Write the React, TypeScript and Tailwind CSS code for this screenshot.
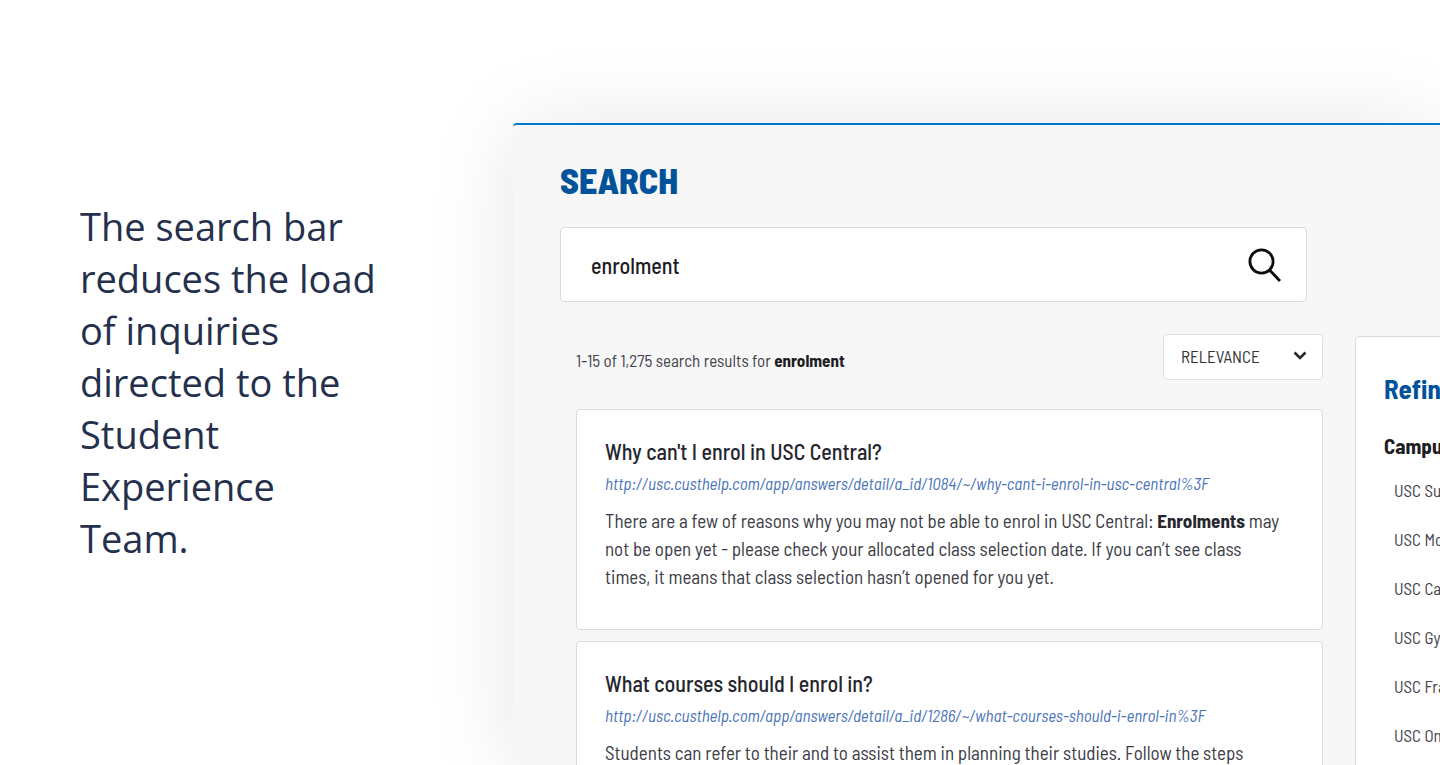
import { useState } from 'react'

interface SearchResult {
  id: number
  title: string
  slug: string
  parts: { text: string; bold?: boolean }[]
}

const results: SearchResult[] = [
  {
    id: 1084,
    title: "Why can't I enrol in USC Central?",
    slug: 'why-cant-i-enrol-in-usc-central%3F',
    parts: [
      { text: 'There are a few of reasons why you may not be able to enrol in USC Central: ' },
      { text: 'Enrolments', bold: true },
      { text: ' may not be open yet - please check your allocated class selection date. If you can’t see class times, it means that class selection hasn’t opened for you yet.' },
    ],
  },
  {
    id: 1286,
    title: 'What courses should I enrol in?',
    slug: 'what-courses-should-i-enrol-in%3F',
    parts: [
      { text: 'Students can refer to their and to assist them in planning their studies. Follow the steps' },
    ],
  },
]

const campuses = ['USC Sunshine Coast', 'USC Moreton Bay', 'USC Caboolture', 'USC Gympie', 'USC Fraser Coast', 'USC Online']

function SearchBox() {
  const [query, setQuery] = useState('enrolment')

  return (
    <form
      className="flex items-center mr-4 h-[75px] rounded border border-[#dadada] bg-white pl-[30px] pr-6"
      onSubmit={(e) => e.preventDefault()}
    >
      <input
        type="text"
        aria-label="Search"
        value={query}
        onChange={(e) => setQuery(e.target.value)}
        className="min-w-0 flex-1 bg-transparent text-[22px] leading-8 font-medium text-[#1d1d24] outline-none"
      />
      <button type="submit" aria-label="Submit search">
        <svg viewBox="0 0 34 36" className="w-[34px] h-9" fill="none" stroke="#0b0b0b" strokeWidth="2.8">
          <circle cx="13.5" cy="14.5" r="11.6" />
          <path d="M21 22.5 L32 34" />
        </svg>
      </button>
    </form>
  )
}

function SortSelect() {
  return (
    <div className="relative">
      <select
        aria-label="Sort by"
        defaultValue="relevance"
        className="block w-40 h-[46px] appearance-none rounded border border-[#e0e0e0] bg-white pl-[17px] text-[17px] text-[#33333b]"
      >
        <option value="relevance">RELEVANCE</option>
        <option value="date">DATE</option>
      </select>
      <svg
        viewBox="0 0 14 10"
        className="pointer-events-none absolute right-4 top-[17px] w-3.5 h-2.5"
        fill="none"
        stroke="#26262b"
        strokeWidth="2.6"
      >
        <path d="M1.5 1.5 L7 7 L12.5 1.5" />
      </svg>
    </div>
  )
}

function ResultCard({ result }: { result: SearchResult }) {
  const path = `http://usc.custhelp.com/app/answers/detail/a_id/${result.id}/~/${result.slug}`

  return (
    <article className="rounded border border-[#dadada] bg-white pl-7 pr-9 pt-[25px] pb-[38px]">
      <h2 className="text-[22px] leading-8 font-medium text-[#26262e]">{result.title}</h2>
      <a href={path} className="block text-[17px] leading-8 italic text-[#4a74b8] whitespace-nowrap">
        {path}
      </a>
      <p className="mt-2 text-[19px] leading-7 text-[#3c3c46]">
        {result.parts.map((part, i) =>
          part.bold ? (
            <strong key={i} className="font-bold text-[#26262e]">{part.text}</strong>
          ) : (
            part.text
          )
        )}
      </p>
    </article>
  )
}

export default function App() {
  return (
    <main className="flex h-screen overflow-hidden bg-white">
      <section className="flex w-[513px] shrink-0 items-center pl-20 pr-32 pb-0.5">
        <p className="font-['Open_Sans','Noto_Sans',sans-serif] text-[38px] leading-[52px] text-[#25304d]">
          The search bar reduces the load of inquiries directed to the Student Experience Team.
        </p>
      </section>

      <section className="mt-[123px] min-w-0 flex-1 rounded-tl border-t-2 border-[#0077c8] bg-[#f7f7f7] pl-[47px] shadow-[0_4px_90px_rgba(0,0,0,0.1)] font-['Barlow_Semi_Condensed','Roboto_Condensed',Roboto,sans-serif]">
        <div className="flex items-start gap-8">
          <div className="min-w-0 flex-1 pt-[33px]">
            <h1 className="mb-[25px] text-[36px] leading-[44px] font-extrabold text-[#00529b]">SEARCH</h1>
            <SearchBox />
            <div className="pl-4">
              <div className="mt-8 flex items-center justify-between">
                <p className="pt-2 text-[17px] text-[#43434d]">
                  1-15 of 1,275 search results for <strong className="font-bold text-[#1d1d24]">enrolment</strong>
                </p>
                <SortSelect />
              </div>
              <div className="mt-[29px] flex flex-col gap-[11px]">
                {results.map((result) => (
                  <ResultCard key={result.id} result={result} />
                ))}
              </div>
            </div>
          </div>

          {/* filters run past the right edge of the window */}
          <aside className="mt-[211px] -mr-[215px] w-[300px] shrink-0 rounded border border-[#dadada] bg-white px-7 pt-[35px] pb-9">
            <h2 className="text-[27px] leading-8 font-bold text-[#00529b]">Refine results</h2>
            <h3 className="mt-[26px] text-[21px] leading-8 font-bold text-[#1d1d24]">Campus</h3>
            <ul className="mt-1 pl-2.5">
              {campuses.map((campus) => (
                <li key={campus}>
                  <a href="#" className="block text-[17px] leading-[49px] text-[#43434d]">{campus}</a>
                </li>
              ))}
            </ul>
          </aside>
        </div>
      </section>
    </main>
  )
}
